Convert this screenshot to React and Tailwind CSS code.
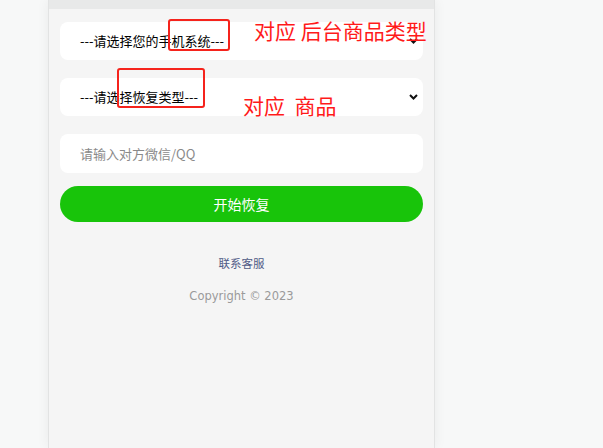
import React, { useState } from 'react';

const cjk = { fontFamily: '"Microsoft YaHei", "Noto Sans CJK SC", "Noto Sans", sans-serif' };

const Chevron = () => (
    <svg width="9" height="6" viewBox="0 0 9 6" className="shrink-0">
        <path d="M1 1l3.5 3.5L8 1" fill="none" stroke="#111" strokeWidth="2" />
    </svg>
);

const SelectBox = ({ label }) => (
    <div className="flex h-[38px] items-center justify-between rounded-lg bg-white pl-5 pr-[5px]">
        <span className="text-[13px] text-black">{label}</span>
        <Chevron />
    </div>
);

const App = () => {
    const [contact, setContact] = useState('');

    return (
        <div className="relative flex h-[448px] w-full overflow-hidden bg-[#f7f8f8]" style={cjk}>
            <div className="ml-[48px] flex w-[387px] flex-col border-x border-[#e2e3e3] bg-[#f5f5f5] shadow-[0_0_12px_rgba(0,0,0,0.06)]">
                <div className="h-[9px] bg-[#e8e9e9]" />
                <div className="flex flex-col gap-[18px] px-[11px] pt-[13px]">
                    <SelectBox label="---请选择您的手机系统---" />
                    <SelectBox label="---请选择恢复类型---" />
                    <input
                        type="text"
                        value={contact}
                        onChange={(e) => setContact(e.target.value)}
                        placeholder="请输入对方微信/QQ"
                        className="h-[39px] rounded-lg bg-white px-5 text-[13px] text-black outline-none placeholder:text-[#8a8a8a]"
                    />
                </div>
                <div className="px-[11px] pt-[13px]">
                    <button className="h-[36px] w-full rounded-full bg-[#18c40a] text-[14px] text-white">开始恢复</button>
                </div>
                <div className="flex flex-col items-center pt-[33px]">
                    <a href="#" className="text-[11.5px] leading-4 text-[#4f5a86]">联系客服</a>
                    <p className="pt-[17px] text-[11.5px] leading-4 text-[#9a9a9a]" style={{ fontFamily: '"DejaVu Sans", sans-serif' }}>
                        Copyright © 2023
                    </p>
                </div>
            </div>

            {/* red annotations laid over the form */}
            <div className="pointer-events-none absolute left-[168px] top-[19px] h-[32px] w-[62px] rounded-[3px] border-2 border-[#f5231c]" />
            <div className="pointer-events-none absolute left-[117px] top-[68px] h-[40px] w-[88px] rounded-[3px] border-2 border-[#f5231c]" />
            <span className="pointer-events-none absolute left-[254px] top-[16px] text-[21px] leading-7 text-[#ff1a1a]">对应 后台商品类型</span>
            <span className="pointer-events-none absolute left-[243px] top-[91px] whitespace-pre text-[21px] leading-7 text-[#ff1a1a]">对应  商品</span>
        </div>
    );
};

export default App;
